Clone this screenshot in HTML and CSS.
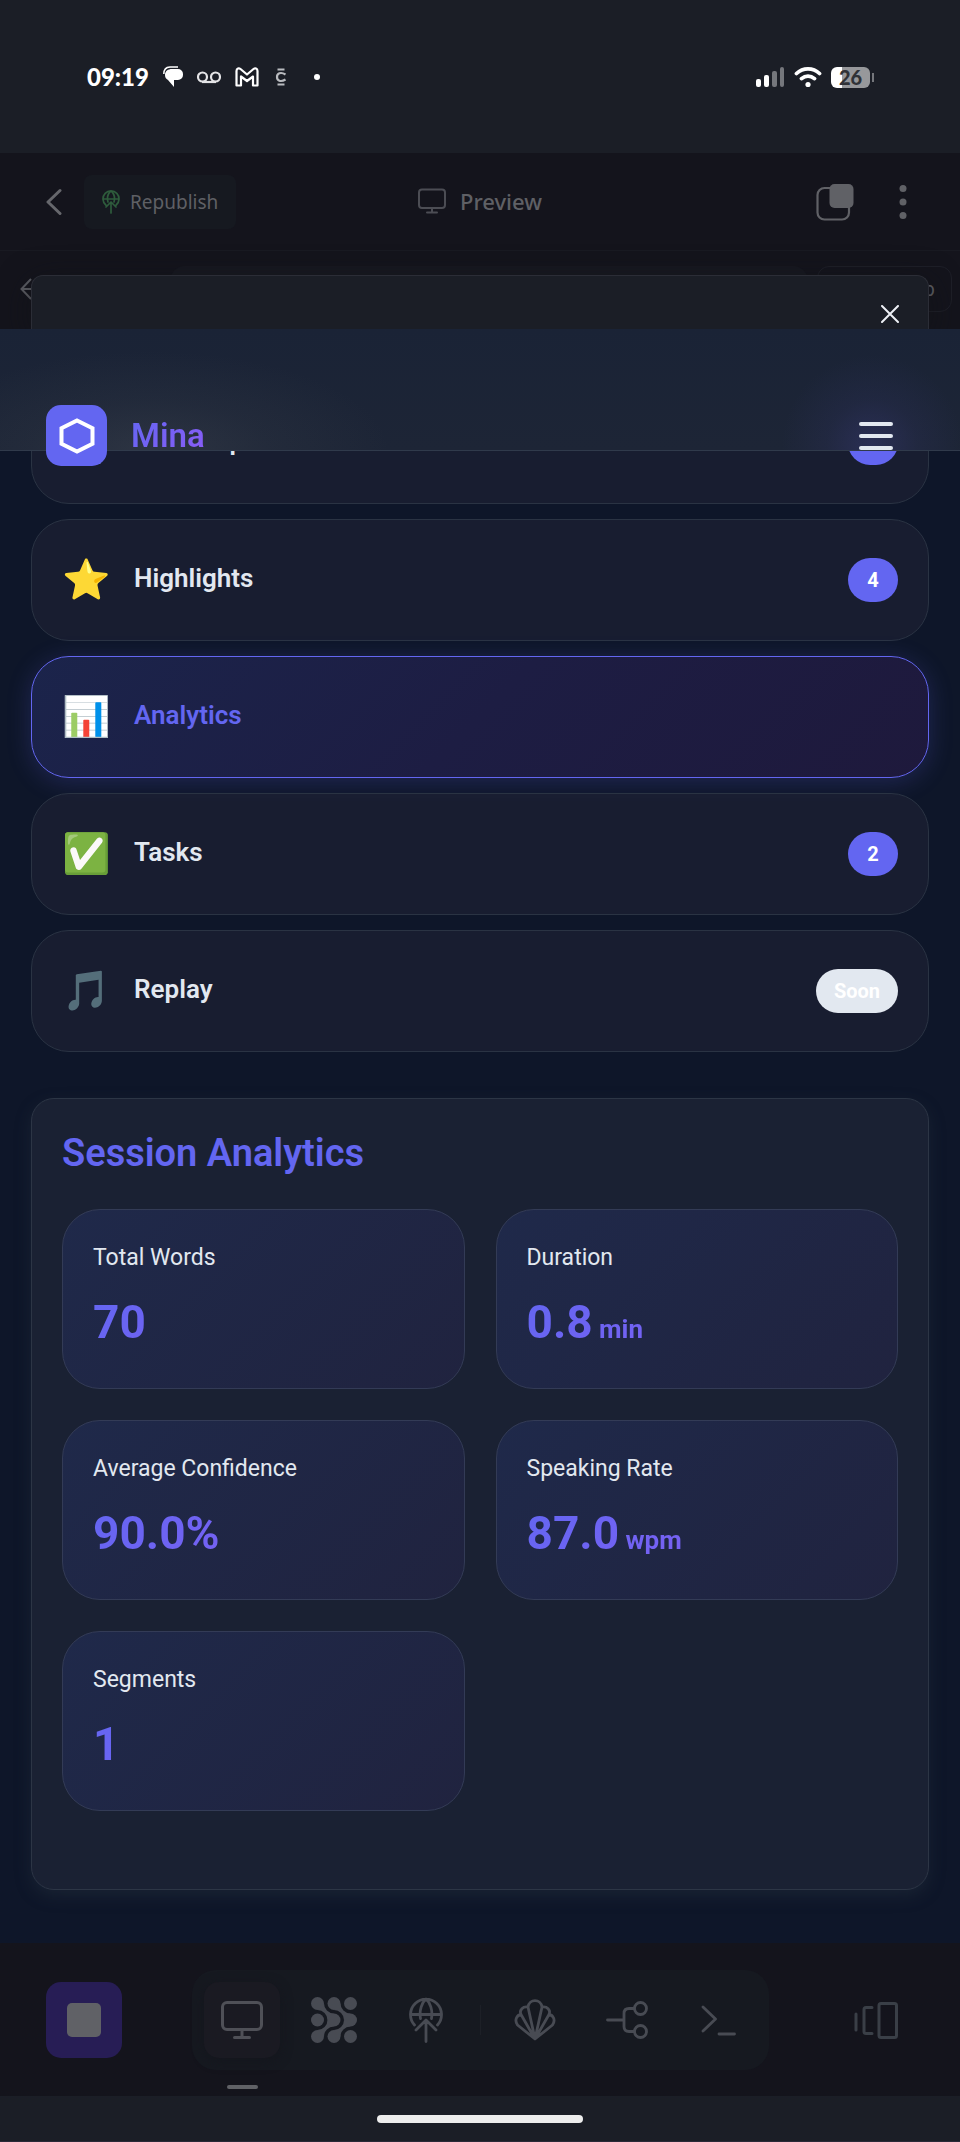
FILE: index.html
```html
<!DOCTYPE html>
<html lang="en">
<head>
<meta charset="utf-8">
<meta name="viewport" content="width=device-width, initial-scale=1">
<title>Mina – Session Analytics</title>
<link rel="stylesheet" href="styles.css">
</head>
<body>
<div class="status-bar">
  <div class="status-group">
    <span class="clock">09:19</span>
    <svg class="notif" width="20" height="22" viewBox="0 0 20 22"><path d="M9 3h6a5 5 0 0 1 5 5v1a5 5 0 0 1-5 5h-4v7l-6-7a5.500 5.500 0 0 1-3-5C2 5 5 3 9 3z" fill="#fff"/><path d="M.8 8C.8 3.500 3 1.200 7 1h8" fill="none" stroke="#fff" stroke-width="1.500"/></svg>
    <svg class="notif" width="24" height="14" viewBox="0 0 24 14" fill="none" stroke="#e4e4e6" stroke-width="2.200"><circle cx="5.500" cy="7" r="4.500"/><circle cx="18.500" cy="7" r="4.500"/><path d="M5 12h14"/></svg>
    <svg class="notif" width="24" height="20" viewBox="0 0 24 20" fill="none" stroke="#fff" stroke-width="2.200" stroke-linejoin="round"><path d="M1.500 18.500V4C1.500 1 4 .8 5.500 2L12 7.500 18.500 2C20 .8 22.500 1 22.500 4v14.500H18V9.500L12 14 6 9.500v9z"/></svg>
    <svg class="notif notif-c" width="12" height="18" viewBox="0 0 12 18" fill="none" stroke="#b9bbbf" stroke-width="2.200"><path d="M10.500 6.500C5.500 3.500 2 5.500 2 9s3.500 5.500 8.500 2.500M2.500 1.500h7M2.500 16.500h7"/></svg>
    <span class="more-dot"></span>
  </div>
  <div class="status-group status-right">
    <svg width="29" height="22" viewBox="0 0 29 22"><rect x="0" y="13" width="5" height="8" rx="2" fill="#fff"/><rect x="8" y="9" width="5" height="12" rx="2" fill="#fff"/><rect x="16" y="5" width="5" height="16" rx="2" fill="#75777c"/><rect x="24" y="1" width="4" height="20" rx="2" fill="#75777c"/></svg>
    <svg width="28" height="22" viewBox="0 0 28 22" fill="none" stroke="#fff" stroke-width="3.800" stroke-linecap="round"><path d="M2.500 7.500C9 1.300 19 1.300 25.500 7.500M7.500 12.600c4-3.300 9-3.300 13 0"/><circle cx="14" cy="18.500" r="2.600" fill="#fff" stroke="none"/></svg>
    <span class="battery"><span class="battery-level">26</span></span>
  </div>
</div>

<div class="workspace">
  <header class="app-header">
    <div class="header-side">
      <button class="icon-btn" aria-label="Back"><svg width="16" height="28" viewBox="0 0 16 28" fill="none" stroke="#66676c" stroke-width="3" stroke-linecap="round" stroke-linejoin="round"><path d="M14 2.500 2 14l12 11.500"/></svg></button>
      <button class="republish"><svg width="18" height="24" viewBox="0 0 18 24" fill="none" stroke="#2e5c3c" stroke-width="1.700" stroke-linecap="round" stroke-linejoin="round"><path d="M3.800 15A8 8 0 1 1 14.200 15M1.200 9h15.600M6 12C4.700 7 6.500 3 9 1c2.500 2 4.300 6 3 11M9 23V12M4 17l5-5 5 5"/></svg><span>Republish</span></button>
    </div>
    <div class="preview"><svg width="28" height="26" viewBox="0 0 28 26" fill="none" stroke="#4c4d54" stroke-width="2" stroke-linecap="round"><rect x="1" y="1.500" width="26" height="18.500" rx="3"/><path d="M14 20v4M9 24.500h10"/></svg><span>Preview</span></div>
    <div class="header-side header-actions">
      <button class="icon-btn" aria-label="Tabs"><svg width="38" height="38" viewBox="0 0 38 38"><rect x="1.500" y="5" width="31.500" height="31.500" rx="7" fill="none" stroke="#606166" stroke-width="2.200"/><rect x="13.500" y="1" width="24" height="24" rx="5" fill="#606166"/></svg></button>
      <button class="icon-btn" aria-label="More"><svg width="8" height="36" viewBox="0 0 8 36" fill="#606166"><circle cx="4" cy="4.500" r="3.500"/><circle cx="4" cy="18" r="3.500"/><circle cx="4" cy="31.500" r="3.500"/></svg></button>
    </div>
  </header>
  <div class="url-row">
    <button class="icon-btn" aria-label="Previous page"><svg width="24" height="22" viewBox="0 0 24 22" fill="none" stroke="#5c5d63" stroke-width="2"><path d="M11 1 1.500 11 11 21M1.500 11H24"/></svg></button>
    <div class="url-field"></div>
    <button class="desktop-btn">Desktop</button>
  </div>
  <div class="sheet"><button class="icon-btn" aria-label="Close"><svg width="18" height="18" viewBox="0 0 18 18" stroke="#eef0f6" stroke-width="2" stroke-linecap="round"><path d="m1 1 16 16M17 1 1 17"/></svg></button></div>
</div>

<header class="mina-header">
  <div class="brand">
    <span class="logo"><svg width="36" height="36" viewBox="0 0 36 36" fill="none" stroke="#fff" stroke-width="4"><path d="m18 2.500 15.500 7.700v15.600L18 33.500 2.500 25.800V10.200z"/></svg></span>
    <span class="brand-name">Mina</span>
  </div>
  <button class="menu-btn" aria-label="Menu"><span></span><span></span><span></span></button>
</header>

<main class="page">
  <nav class="tabs">
    <button class="tab"><span class="tab-icon">📝</span><span class="tab-title">Transcript</span><span class="badge">1</span></button>
    <button class="tab"><span class="tab-icon">⭐</span><span class="tab-title">Highlights</span><span class="badge">4</span></button>
    <button class="tab tab-active"><span class="tab-icon">📊</span><span class="tab-title">Analytics</span></button>
    <button class="tab"><span class="tab-icon">✅</span><span class="tab-title">Tasks</span><span class="badge">2</span></button>
    <button class="tab"><span class="tab-icon">🎵</span><span class="tab-title">Replay</span><span class="badge badge-soon">Soon</span></button>
  </nav>
  <section class="panel">
    <h2>Session Analytics</h2>
    <div class="stats">
      <div class="stat"><div class="stat-label">Total Words</div><div class="stat-value">70</div></div>
      <div class="stat"><div class="stat-label">Duration</div><div class="stat-value">0.8<small> min</small></div></div>
      <div class="stat"><div class="stat-label">Average Confidence</div><div class="stat-value">90.0%</div></div>
      <div class="stat"><div class="stat-label">Speaking Rate</div><div class="stat-value">87.0<small> wpm</small></div></div>
      <div class="stat"><div class="stat-label">Segments</div><div class="stat-value">1</div></div>
    </div>
  </section>
</main>

<footer class="dock">
  <button class="stop-btn" aria-label="Stop"><span></span></button>
  <div class="toolbar">
    <button class="tool tool-active" aria-label="Preview"><svg width="44" height="40" viewBox="0 0 44 40" fill="none" stroke="#4f5057" stroke-width="3" stroke-linecap="round"><rect x="2.500" y="2.500" width="39" height="27" rx="4.500"/><path d="M22 30v7M14.500 37.500h15"/></svg></button>
    <button class="tool" aria-label="Agent"><svg width="46" height="46" viewBox="0 0 46 46" fill="#484b53"><circle cx="6.500" cy="6.500" r="6.500"/><circle cx="23" cy="6.500" r="6.500"/><circle cx="39.500" cy="6.500" r="6.500"/><circle cx="6.500" cy="23" r="6.500"/><circle cx="23" cy="23" r="6.500"/><circle cx="39.500" cy="23" r="6.500"/><circle cx="6.500" cy="39.500" r="6.500"/><circle cx="23" cy="39.500" r="6.500"/><circle cx="39.500" cy="39.500" r="6.500"/><path d="M13 6.500A10 10 0 0 0 23 16.500L16.500 23A10 10 0 0 0 6.500 13zM13 39.500A10 10 0 0 1 23 29.500L16.500 23A10 10 0 0 1 6.500 33zM29.500 6.500A10 10 0 0 0 39.500 16.500L33 23A10 10 0 0 0 23 13zM29.500 39.500A10 10 0 0 1 39.500 29.500L33 23A10 10 0 0 1 23 33z"/></svg></button>
    <button class="tool" aria-label="Publish"><svg width="34" height="46" viewBox="0 0 34 46" fill="none" stroke="#484b53" stroke-width="2.800" stroke-linecap="round" stroke-linejoin="round"><path d="M5.500 28A15.500 15.500 0 1 1 28.500 28M2 17.500h30M11.500 21.500C10 13 13 5.500 17 2c4 3.500 7 11 5.500 19.500M17 44.500V23.500M7 33l10-10 10 10"/></svg></button>
    <span class="tool-divider"></span>
    <button class="tool" aria-label="Shell"><svg width="42" height="42" viewBox="0 0 42 42" fill="none" stroke="#484b53" stroke-width="2.800" stroke-linejoin="round"><path d="M21 40 3.500 26C0 21 3 16 7 15.500 5 11 9 7 14 8c1-8.500 13-8.500 14 0 5-1 9 3 7 7.500 4 .5 7 5.500 3.500 10.500zM21 40 7 15.500M21 40 14 8M21 40l7-32M21 40l14-24.500"/></svg></button>
    <button class="tool" aria-label="Workflows"><svg width="42" height="38" viewBox="0 0 42 38" fill="none" stroke="#484b53" stroke-width="2.800" stroke-linecap="round"><circle cx="34.500" cy="7.500" r="6"/><circle cx="34.500" cy="30.500" r="6"/><path d="M28 7.500h-5q-5 0-5 5v13q0 5 5 5h5M1.500 19H18"/></svg></button>
    <button class="tool" aria-label="Console"><svg width="36" height="32" viewBox="0 0 36 32" fill="none" stroke="#484b53" stroke-width="2.800" stroke-linecap="round" stroke-linejoin="round"><path d="m2 3 12.500 12L2 27M18 30h15.500"/></svg></button>
  </div>
  <button class="icon-btn layout-btn" aria-label="Layout"><svg width="44" height="38" viewBox="0 0 44 38" fill="none" stroke="#3a3f47" stroke-width="3" stroke-linecap="round" stroke-linejoin="round"><rect x="25" y="2.500" width="17.500" height="34" rx="2"/><path d="M18 6.500h-6q-2 0-2 2v22q0 2 2 2h6M2 13v16"/></svg></button>
  <span class="dock-indicator"></span>
</footer>
<div class="home-bar"><span></span></div>
</body>
</html>
```

FILE: styles.css
```css
* { box-sizing: border-box; }
body {
  margin: 0;
  background: #0e1629;
  color: #e2e8f0;
  font-family: Roboto, "Liberation Sans", sans-serif;
}
button {
  margin: 0;
  padding: 0;
  border: 0;
  background: none;
  color: inherit;
  font: inherit;
}
svg { display: block; }
.icon-btn { flex: none; }

/* Device status bar */
.status-bar {
  display: flex;
  justify-content: space-between;
  padding: 62px 90px 61px 87px;
  background: #1b1e26;
}
.status-group { display: flex; align-items: center; height: 30px; }
.clock { font: 900 24px/30px Lato, sans-serif; color: #fff; }
.notif { margin-left: 14px; }
.notif-c { margin-left: 16px; }
.more-dot { width: 6px; height: 6px; margin-left: 27px; border-radius: 50%; background: #fff; }
.status-right { gap: 9px; }
.battery {
  position: relative;
  width: 39px;
  height: 21px;
  border-radius: 6px;
  background: linear-gradient(90deg, #fff 11px, #97989b 11px);
}
.battery::after {
  content: "";
  position: absolute;
  left: 41px;
  top: 6px;
  width: 2px;
  height: 9px;
  background: #75777c;
}
.battery-level {
  display: block;
  text-align: center;
  font: 900 20px/21px Lato, sans-serif;
  color: #303237;
}

/* Dimmed workspace behind the sheet */
.workspace {
  position: relative;
  overflow: hidden;
  background: #14141c;
  color: #5f6065;
  font-family: "Noto Sans", sans-serif;
}
.app-header {
  display: grid;
  grid-template-columns: 1fr auto 1fr;
  align-items: center;
  padding: 22px 46px 21px;
  border-bottom: 1px solid #191a22;
}
.header-side { display: flex; align-items: center; gap: 22px; }
.header-actions { justify-content: flex-end; gap: 45px; padding-right: 7px; }
.republish {
  display: flex;
  align-items: center;
  gap: 10px;
  height: 54px;
  padding: 0 18px;
  border-radius: 8px;
  background: #161920;
  font-size: 19px;
}
.preview {
  display: flex;
  align-items: center;
  gap: 14px;
  padding-bottom: 2px;
  font-size: 22px;
  font-weight: 500;
  line-height: 26px;
}
.url-row {
  display: flex;
  height: 78px;
  padding: 15px 8px 16px 20px;
  gap: 9px;
}
.url-row .icon-btn { height: 46px; }
.url-field { flex: 1; margin-left: 117px; border-radius: 15px 15px 0 0; background: #171820; }
.desktop-btn {
  width: 135px;
  height: 46px;
  padding-right: 16px;
  border: 1px solid #1e1f28;
  border-radius: 12px;
  text-align: right;
  font-size: 19px;
}
.sheet {
  position: absolute;
  top: 122px;
  right: 31px;
  bottom: 0;
  left: 31px;
  display: flex;
  justify-content: flex-end;
  align-items: flex-start;
  padding: 29px 29px 0;
  border: 1px solid #2b2d36;
  border-bottom: 0;
  border-radius: 12px 12px 0 0;
  background: #1b1e26;
  box-shadow: 0 8px 32px rgba(16, 18, 22, 0.6);
}

/* Mina header */
.mina-header {
  position: relative;
  z-index: 2;
  display: flex;
  justify-content: space-between;
  align-items: flex-start;
  height: 122px;
  padding: 76px 61px 0 46px;
  border-bottom: 1px solid #303a4b;
  background:
    radial-gradient(ellipse 240px 100px at 150px 122px, rgba(95, 100, 105, 0.24), rgba(95, 100, 105, 0.09) 50%, transparent),
    radial-gradient(circle 90px at 872px 116px, rgba(66, 64, 140, 0.36), rgba(66, 64, 140, 0.12) 50%, transparent),
    linear-gradient(#1a2336, #1d2536);
}
.brand { display: flex; align-items: center; gap: 24px; }
.logo {
  display: grid;
  place-items: center;
  width: 61px;
  height: 61px;
  border-radius: 15px;
  background: #6366f1;
}
.brand-name {
  background: linear-gradient(135deg, #6366f1, #8b5cf6);
  background-clip: text;
  color: transparent;
  font-size: 33px;
  font-weight: 600;
  line-height: 46px;
}
.menu-btn {
  display: grid;
  align-content: center;
  gap: 8px;
  width: 46px;
  height: 61px;
  padding: 0 6px;
}
.menu-btn span { height: 4px; border-radius: 2px; background: #e2e8f0; }

/* Page content */
.page { margin-top: -69px; padding: 0 31px 53px; }
.tabs { display: grid; gap: 15px; margin-bottom: 46px; }
.tab {
  display: flex;
  align-items: center;
  gap: 24px;
  height: 122px;
  padding: 0 30px;
  border: 1px solid #2a3343;
  border-radius: 38px;
  background: rgba(32, 35, 54, 0.6);
  text-align: left;
}
.tab-active {
  border-color: #6366f1;
  background: linear-gradient(135deg, #1b244b, #1d1d43 50%, #1e193c);
  box-shadow: 0 4px 24px rgba(99, 102, 241, 0.22);
  color: #6366f1;
}
.tab-icon { width: 48px; font: 39px/46px "Noto Color Emoji", sans-serif; }
.tab-title { flex: 1; padding-bottom: 4px; font-size: 26px; font-weight: 600; line-height: 40px; }
.badge {
  min-width: 50px;
  padding: 0 18px;
  border-radius: 22px;
  background: #6366f1;
  color: #fff;
  text-align: center;
  font-size: 20px;
  font-weight: 700;
  line-height: 44px;
}
.badge-soon { background: #e2e8f0; }

.panel {
  padding: 30px 30px 78px;
  border: 1px solid #2c3545;
  border-radius: 23px;
  background: #1a2133;
  box-shadow: 0 6px 16px rgba(40, 52, 66, 0.4);
}
.panel h2 { margin: 0 0 32px; color: #6366f1; font-size: 38px; font-weight: 600; line-height: 48px; }
.stats { display: grid; grid-template-columns: 1fr 1fr; gap: 31px; }
.stat {
  padding: 31px 30px 29px;
  border: 1px solid #333b56;
  border-radius: 38px;
  background: linear-gradient(135deg, #1f294a, #20233f);
}
.stat-label { margin-bottom: 12px; font-size: 23px; line-height: 33px; }
.stat-value {
  background: linear-gradient(135deg, #6366f1, #8b5cf6);
  background-clip: text;
  color: transparent;
  font-size: 46px;
  font-weight: 700;
  line-height: 73px;
}
.stat-value small { font-size: 26px; line-height: 1; }

/* Dock */
.dock {
  position: relative;
  display: grid;
  grid-template-columns: 1fr auto 1fr;
  align-items: center;
  padding: 27px 46px 26px;
  background: #14141c;
}
.stop-btn {
  display: grid;
  place-items: center;
  width: 76px;
  height: 76px;
  border-radius: 15px;
  background: #271d55;
}
.stop-btn span { width: 34px; height: 34px; border-radius: 5px; background: #606166; }
.layout-btn { justify-self: end; padding-right: 16px; }
.toolbar {
  display: flex;
  align-items: center;
  gap: 16px;
  padding: 12px;
  border-radius: 24px;
  background: #161920;
}
.tool { display: grid; place-items: center; width: 76px; height: 76px; border-radius: 15px; }
.tool-active { background: #1a1a22; box-shadow: 0 3px 12px #14161d; }
.tool-divider { width: 1px; height: 30px; background: #1d2027; }
.dock-indicator {
  position: absolute;
  left: 227px;
  bottom: 7px;
  width: 31px;
  height: 4px;
  border-radius: 2px;
  background: #606166;
}
.home-bar {
  display: flex;
  justify-content: center;
  padding: 19px 0 18px;
  border-bottom: 1px solid #2a2a38;
  background: #1b1e26;
}
.home-bar span { width: 206px; height: 8px; border-radius: 4px; background: #ededed; }
```
